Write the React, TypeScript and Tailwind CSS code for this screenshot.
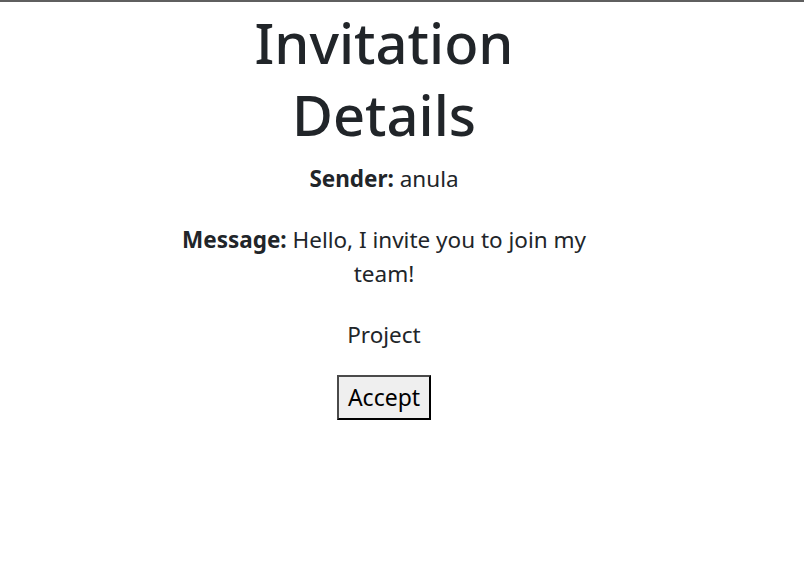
export default function App() {
  return (
    <div
      className="min-h-[566px] w-full border-t-2 border-[#5f5f5f] bg-white text-[#212529]"
      style={{ fontFamily: '"Noto Sans", "Open Sans", sans-serif' }}
    >
      <div className="ml-[174px] flex w-[420px] flex-col items-center pt-[4px] text-center">
        <h1 className="text-[56px] font-[550] leading-[72px]">Invitation Details</h1>
        <p className="mt-[12px] text-[22.5px] leading-[34px]">
          <span className="font-bold">Sender:</span> anula
        </p>
        <p className="mt-[27px] text-[22.5px] leading-[34px]">
          <span className="font-bold">Message:</span> Hello, I invite you to join my team!
        </p>
        <p className="mt-[27px] text-[22.5px] leading-[34px]">Project</p>
        <button className="mt-[23px] border-2 border-b-black border-l-[#4a4a4a] border-r-black border-t-[#4a4a4a] bg-[#efefef] px-[9px] py-[4px] text-[23px] leading-[33px] text-black">
          Accept
        </button>
      </div>
    </div>
  );
}
